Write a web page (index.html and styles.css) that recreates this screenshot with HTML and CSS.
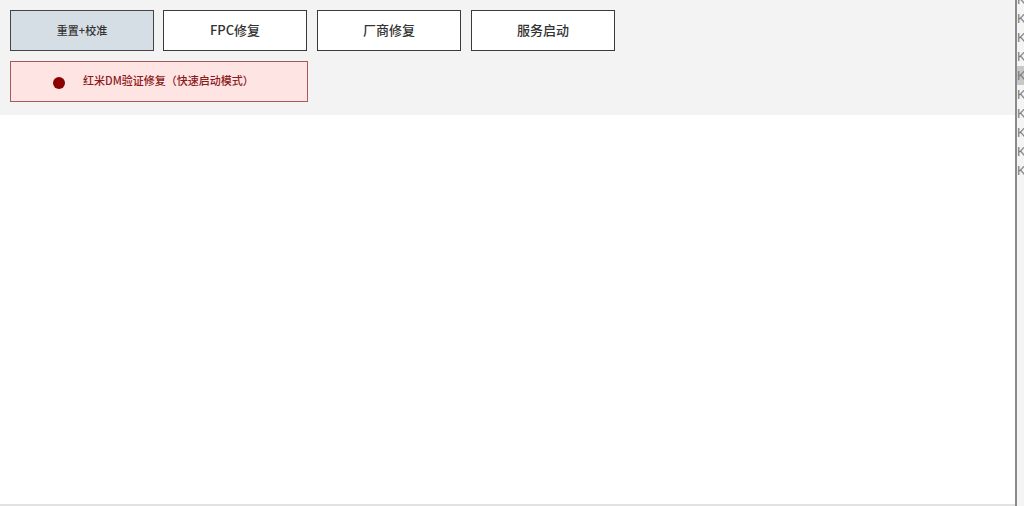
FILE: index.html
```html
<!DOCTYPE html>
<html lang="zh-CN">
<head>
    <meta charset="UTF-8">
    <title>工具</title>
    <link rel="stylesheet" href="styles.css">
</head>
<body>

<div class="app">
    <main class="main">
        <section class="toolbar">
            <div class="btn_row">
                <button class="btn btn-small btn-active">重置+校准</button>
                <button class="btn">FPC修复</button>
                <button class="btn">厂商修复</button>
                <button class="btn">服务启动</button>
            </div>
            <div class="btn_row">
                <button class="btn btn-wide btn-danger"><span class="dot"></span>红米DM验证修复（快速启动模式）</button>
            </div>
        </section>
        <section class="content"></section>
        <div class="statusbar"></div>
    </main>
    <aside class="side">
        <ul class="side_list">
            <li>KI</li>
            <li>KI</li>
            <li>KI</li>
            <li>KI</li>
            <li class="side_sel">KI</li>
            <li>KI</li>
            <li>KI</li>
            <li>KI</li>
            <li>KI</li>
            <li>KI</li>
        </ul>
    </aside>
</div>

</body>
</html>
```

FILE: styles.css
```css
body {
    margin: 0;
    font-family: "Noto Sans CJK SC", "Noto Sans", sans-serif;
    background: #fff;
}

.app {
    display: flex;
    flex-flow: row nowrap;
    width: 1024px;
    height: 506px;
    overflow: hidden;
}

.main {
    width: 1015px;
    display: flex;
    flex-flow: column nowrap;
}

.toolbar {
    height: 115px;
    box-sizing: border-box;
    padding: 10px 10px 0;
    background: #f3f3f3;
    display: flex;
    flex-flow: column nowrap;
    gap: 10px;
}

.btn_row {
    display: flex;
    flex-flow: row nowrap;
    gap: 9px;
}

.btn_row .btn:nth-child(n+3) {
    margin-left: 1px;
}

.btn {
    width: 144px;
    height: 41px;
    box-sizing: border-box;
    border: 1px solid #3a3a3a;
    background: #fff;
    color: #333;
    font-family: inherit;
    font-size: 13px;
    font-weight: 500;
    padding: 0 0 3px;
    display: flex;
    align-items: center;
    justify-content: center;
}

.btn-small {
    font-size: 11px;
    padding-bottom: 1px;
}

.btn-active {
    background: #d5dde5;
    border-color: #444;
}

.btn-wide {
    width: 298px;
    justify-content: flex-start;
    padding: 0 0 3px 42px;
}

.btn-danger {
    background: #ffe4e4;
    border-color: #a85a5a;
    color: #8b1a1a;
    font-size: 11px;
}

.dot {
    width: 12px;
    height: 12px;
    border-radius: 50%;
    background: #8b0000;
    margin-right: 18px;
    margin-top: 6px;
}

.content {
    flex: 1;
    background: #fff;
}

.statusbar {
    height: 2px;
    background: #e2e2e2;
}

.side {
    width: 9px;
    border-left: 2px solid #8a8a8a;
    background: #f4f4f4;
    box-sizing: border-box;
    overflow: hidden;
}

.side_list {
    list-style: none;
    margin: -10px 0 0;
    padding: 0;
    white-space: nowrap;
}

.side_list li {
    height: 19px;
    line-height: 19px;
    font-family: "Liberation Sans", sans-serif;
    font-size: 13px;
    color: #7a7a7a;
    padding-left: 0;
}

.side_list .side_sel {
    background: #c8c8c8;
}
```
